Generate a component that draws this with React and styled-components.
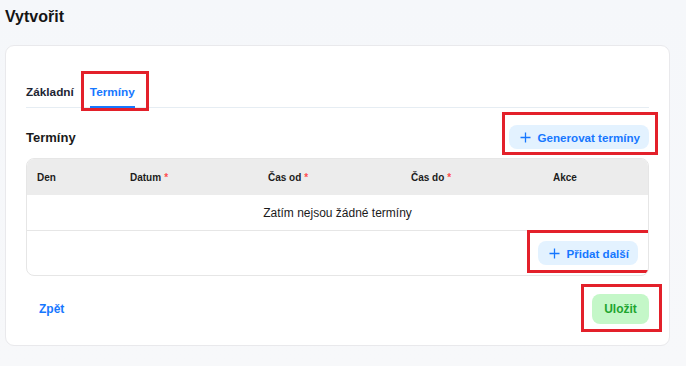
import React from "react";
import styled, { createGlobalStyle } from "styled-components";

const Global = createGlobalStyle`
  html, body { margin: 0; padding: 0; }
  body {
    background: linear-gradient(180deg, #f5f7fa 0%, #f7f8fa 100%);
    font-family: "Liberation Sans", Arial, sans-serif;
    color: #1f1f1f;
    width: 686px;
    height: 366px;
    overflow: hidden;
  }
  * { box-sizing: border-box; }
`;

const Page = styled.div`
  padding: 7px 16px 0 5px;
`;

const Title = styled.h1`
  margin: 0;
  font-size: 16px;
  line-height: 20px;
  font-weight: 700;
  color: #141414;
`;

const Card = styled.div`
  margin-top: 18px;
  height: 301px;
  background: #fff;
  border: 1px solid #e9e9ec;
  border-radius: 9px;
  padding: 28px 20px 20px;
  display: flex;
  flex-direction: column;
`;

const TabBar = styled.div`
  display: flex;
  gap: 16px;
  border-bottom: 1px solid #e6edf3;
`;

const Tab = styled.div`
  position: relative;
  padding: 10px 0 7px;
  font-size: 11.8px;
  line-height: 16px;
  font-weight: 700;
  color: ${(p) => (p.$active ? "#1677ff" : "#1d2433")};
  &::after {
    content: "";
    position: absolute;
    left: 0;
    right: 0;
    bottom: -1px;
    height: 2px;
    background: ${(p) => (p.$active ? "#1677ff" : "transparent")};
  }
`;

const Mark = styled.span`
  position: absolute;
  pointer-events: none;
  border: 3px solid #e3202a;
  top: ${(p) => p.$t}px;
  right: ${(p) => p.$r}px;
  bottom: ${(p) => p.$b}px;
  left: ${(p) => p.$l}px;
`;

const SectionRow = styled.div`
  margin-top: 17px;
  display: flex;
  align-items: center;
  justify-content: space-between;
  height: 24px;
`;

const SectionTitle = styled.h2`
  margin: 0;
  font-size: 13px;
  font-weight: 700;
  color: #1a1a1a;
`;

const Wrap = styled.div`
  position: relative;
  display: inline-flex;
`;

const SoftButton = styled.button`
  display: inline-flex;
  align-items: center;
  gap: 7px;
  height: 24px;
  padding: 0 9px 0 11px;
  border: none;
  border-radius: 8px;
  background: #e3f2ff;
  color: #1677ff;
  font-family: inherit;
  font-size: 11.6px;
  font-weight: 700;
  cursor: pointer;
`;

const Table = styled.div`
  margin-top: 9px;
  border: 1px solid #e6e6e6;
  border-radius: 8px;
  overflow: hidden;
`;

const Grid = styled.div`
  display: grid;
  grid-template-columns: 93px 138px 143px 142px 1fr;
`;

const Head = styled(Grid)`
  height: 36px;
  background: #ececec;
  align-items: center;
`;

const HeadCell = styled.div`
  padding-left: 10px;
  font-size: 10px;
  font-weight: 700;
  color: #1c1c1c;
`;

const Req = styled.span`
  color: #ff4d4f;
  margin-left: 3px;
`;

const Empty = styled.div`
  height: 36px;
  display: flex;
  align-items: center;
  justify-content: center;
  font-size: 12px;
  color: #1a1a1a;
  border-bottom: 1px solid #e6e6e6;
`;

const TableFoot = styled.div`
  display: flex;
  justify-content: flex-end;
  padding: 10px 10px 10px;
`;

const Footer = styled.div`
  margin-top: 18px;
  display: flex;
  align-items: center;
  justify-content: space-between;
`;

const LinkButton = styled.button`
  height: 30px;
  padding: 0 13px;
  border: none;
  background: transparent;
  color: #1677ff;
  font-family: inherit;
  font-size: 12px;
  font-weight: 700;
  cursor: pointer;
`;

const SaveButton = styled.button`
  height: 30px;
  width: 57px;
  border: none;
  border-radius: 8px;
  background: #c4f7c8;
  color: #1ea52f;
  font-family: inherit;
  font-size: 12px;
  font-weight: 700;
  cursor: pointer;
`;

const Plus = () => (
  <svg width="11" height="11" viewBox="0 0 11 11" aria-hidden="true">
    <path d="M5.5 0.5V10.5M0.5 5.5H10.5" stroke="currentColor" strokeWidth="1.3" fill="none" />
  </svg>
);

export default function App() {
  return (
    <>
      <Global />
      <Page>
        <Title>Vytvořit</Title>
        <Card>
          <TabBar>
            <Tab>Základní</Tab>
            <Tab $active>
              Termíny
              <Mark $t={-3} $r={-14} $b={-4} $l={-9} />
            </Tab>
          </TabBar>
          <SectionRow>
            <SectionTitle>Termíny</SectionTitle>
            <Wrap>
              <SoftButton>
                <Plus />
                Generovat termíny
              </SoftButton>
              <Mark $t={-13} $r={-9} $b={-6} $l={-7} />
            </Wrap>
          </SectionRow>
          <Table>
            <Head>
              <HeadCell>Den</HeadCell>
              <HeadCell>
                Datum<Req>*</Req>
              </HeadCell>
              <HeadCell>
                Čas od<Req>*</Req>
              </HeadCell>
              <HeadCell>
                Čas do<Req>*</Req>
              </HeadCell>
              <HeadCell>Akce</HeadCell>
            </Head>
            <Empty>Zatím nejsou žádné termíny</Empty>
            <TableFoot>
              <Wrap>
                <SoftButton>
                  <Plus />
                  Přidat další
                </SoftButton>
                <Mark $t={-11} $r={-14} $b={-8} $l={-11} />
              </Wrap>
            </TableFoot>
          </Table>
          <Footer>
            <LinkButton>Zpět</LinkButton>
            <Wrap>
              <SaveButton>Uložit</SaveButton>
              <Mark $t={-10} $r={-13} $b={-8} $l={-11} />
            </Wrap>
          </Footer>
        </Card>
      </Page>
    </>
  );
}
